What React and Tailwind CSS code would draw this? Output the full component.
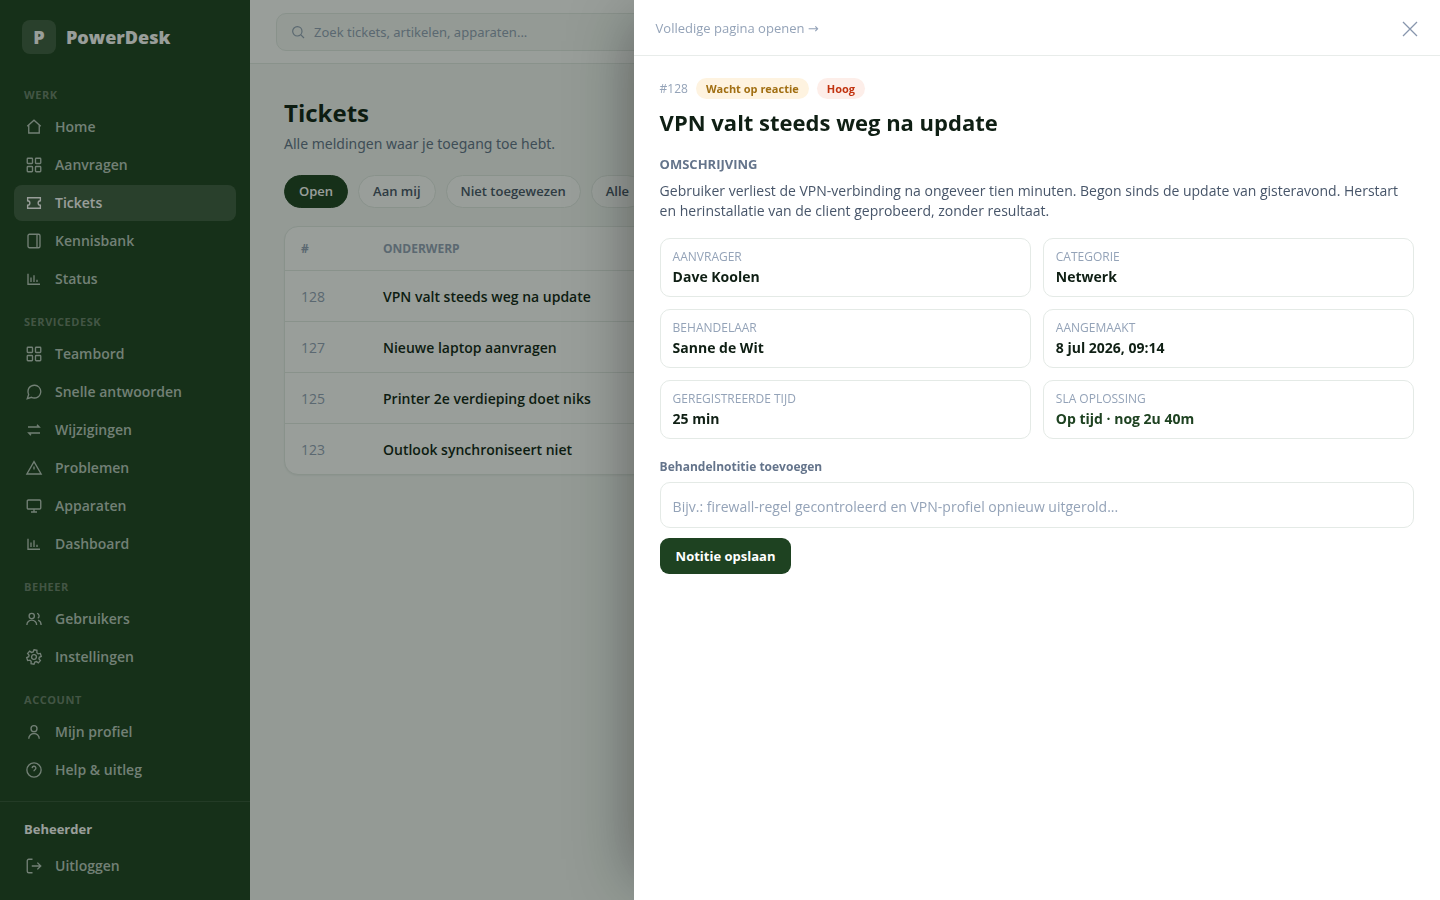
import { useState } from "react";

const icons = {
  home: <path d="M3 11l9-8 9 8M5 9.5V20h14V9.5" />,
  grid: (
    <>
      <rect x="3" y="3" width="7" height="7" rx="1" />
      <rect x="14" y="3" width="7" height="7" rx="1" />
      <rect x="3" y="14" width="7" height="7" rx="1" />
      <rect x="14" y="14" width="7" height="7" rx="1" />
    </>
  ),
  ticket: <path d="M3.5 5h17v4a3 3 0 0 0 0 6v4h-17v-4a3 3 0 0 0 0-6z" />,
  book: (
    <>
      <rect x="4" y="3" width="16" height="18" rx="2" />
      <path d="M16 3v18" />
    </>
  ),
  chart: <path d="M4 5v14h16M8 16v-6M12 16V7M16 16v-3" />,
  chat: (
    <path d="M21 11.5a8.4 8.4 0 0 1-.9 3.8 8.5 8.5 0 0 1-7.6 4.7 8.4 8.4 0 0 1-3.8-.9L3 21l1.9-5.7a8.4 8.4 0 0 1-.9-3.8 8.5 8.5 0 0 1 4.7-7.6 8.4 8.4 0 0 1 3.8-.9h.5a8.5 8.5 0 0 1 8 8z" />
  ),
  swap: <path d="M4 8h15l-3-3M20 16H5l3 3" />,
  alert: <path d="M12 3.5L21.5 20h-19zM12 10v4" />,
  monitor: (
    <>
      <rect x="3" y="4" width="18" height="12" rx="1.5" />
      <path d="M12 16v4M8 20h8" />
    </>
  ),
  users: (
    <>
      <circle cx="9" cy="8" r="3.5" />
      <path d="M2.5 20a6.5 6.5 0 0 1 13 0M16 4.5a3.5 3.5 0 0 1 1 6.5M17.5 13.5c2.4 1 4 3.3 4 6.5" />
    </>
  ),
  gear: (
    <g transform="rotate(12 12 12)">
      <circle cx="12" cy="12" r="3.2" />
      <path d="M10 2.500h4l.5 3 2 1.200 2.800-1.100 2 3.500-2.300 1.800v2.200l2.300 1.800-2 3.500-2.800-1.100-2 1.200-.5 3h-4l-.5-3-2-1.200-2.800 1.100-2-3.500L5 13.100v-2.200L2.700 9.100l2-3.500 2.800 1.100 2-1.200z" />
    </g>
  ),
  user: (
    <>
      <circle cx="12" cy="7.5" r="4" />
      <path d="M5 21a7 7 0 0 1 14 0" />
    </>
  ),
  help: (
    <>
      <circle cx="12" cy="12" r="9.5" />
      <path d="M9.5 9.5a2.5 2.5 0 1 1 3.7 2.2c-.8.5-1.2 1-1.2 1.8" />
    </>
  ),
  logout: <path d="M10 3H5a2 2 0 0 0-2 2v14a2 2 0 0 0 2 2h5M9 12h12M16.5 7.5L21 12l-4.5 4.5" />,
  search: (
    <>
      <circle cx="11" cy="11" r="7" />
      <path d="M16 16l5 5" />
    </>
  ),
};

const Icon = ({ name, className = "size-[18px]" }) => (
  <svg
    viewBox="0 0 24 24"
    className={`shrink-0 ${className}`}
    fill="none"
    stroke="currentColor"
    strokeWidth="1.8"
    aria-hidden="true"
  >
    {icons[name]}
  </svg>
);

const navGroups = [
  {
    label: "Werk",
    items: [
      { icon: "home", label: "Home" },
      { icon: "grid", label: "Aanvragen" },
      { icon: "ticket", label: "Tickets" },
      { icon: "book", label: "Kennisbank" },
      { icon: "chart", label: "Status" },
    ],
  },
  {
    label: "Servicedesk",
    items: [
      { icon: "grid", label: "Teambord" },
      { icon: "chat", label: "Snelle antwoorden" },
      { icon: "swap", label: "Wijzigingen" },
      { icon: "alert", label: "Problemen" },
      { icon: "monitor", label: "Apparaten" },
      { icon: "chart", label: "Dashboard" },
    ],
  },
  {
    label: "Beheer",
    items: [
      { icon: "users", label: "Gebruikers" },
      { icon: "gear", label: "Instellingen" },
    ],
  },
  {
    label: "Account",
    items: [
      { icon: "user", label: "Mijn profiel" },
      { icon: "help", label: "Help & uitleg" },
    ],
  },
];

const tickets = [
  { id: 128, subject: "VPN valt steeds weg na update" },
  { id: 127, subject: "Nieuwe laptop aanvragen" },
  { id: 125, subject: "Printer 2e verdieping doet niks" },
  { id: 123, subject: "Outlook synchroniseert niet" },
];

const details = [
  { label: "Aanvrager", value: "Dave Koolen" },
  { label: "Categorie", value: "Netwerk" },
  { label: "Behandelaar", value: "Sanne de Wit" },
  { label: "Aangemaakt", value: "8 jul 2026, 09:14" },
  { label: "Geregistreerde tijd", value: "25 min" },
  { label: "SLA oplossing", value: "Op tijd · nog 2u 40m", ok: true },
];

const NavItem = ({ icon, label, active }) => (
  <a
    href="#"
    className={`flex h-9 items-center gap-3 rounded-lg px-[11px] text-sm font-semibold ${
      active ? "bg-white/15 text-white" : "text-[#bccbc0]"
    }`}
  >
    <Icon name={icon} />
    {label}
  </a>
);

const Sidebar = () => (
  <aside className="flex w-[250px] shrink-0 flex-col bg-[#1e4221]">
    <div className="flex items-center gap-[10px] px-[22px] pt-5 text-white">
      <span className="flex size-[34px] items-center justify-center rounded-lg bg-white/15 text-lg font-extrabold">
        P
      </span>
      <span className="text-lg font-extrabold">PowerDesk</span>
    </div>
    <nav className="flex-1 px-[14px] pt-4">
      {navGroups.map((group) => (
        <div key={group.label}>
          <h2 className="px-[10px] pt-[17px] pb-[6px] text-[11px] leading-4 font-bold tracking-wider text-white/35 uppercase">
            {group.label}
          </h2>
          <div className="flex flex-col gap-[2px]">
            {group.items.map((item) => (
              <NavItem key={item.label} {...item} active={item.label === "Tickets"} />
            ))}
          </div>
        </div>
      ))}
    </nav>
    <div className="border-t border-white/10 px-[14px] pt-4 pb-4">
      <p className="mb-2 px-[10px] text-[13px] leading-[22px] font-bold text-white">Beheerder</p>
      <NavItem icon="logout" label="Uitloggen" />
    </div>
  </aside>
);

const TicketList = () => {
  const [filter, setFilter] = useState("Open");

  return (
    <main className="px-[34px] pt-[31px]">
      <h1 className="text-2xl leading-9 font-bold text-[#0f1f14]">Tickets</h1>
      <p className="mt-px font-['Noto_Sans',sans-serif] text-sm leading-6 text-[#64748b]">
        Alle meldingen waar je toegang toe hebt.
      </p>
      <div className="mt-[19px] flex gap-[10px]">
        {["Open", "Aan mij", "Niet toegewezen", "Alle"].map((label) => (
          <button
            key={label}
            onClick={() => setFilter(label)}
            className={`h-[33px] rounded-full border px-[14px] text-[13px] font-semibold whitespace-nowrap ${
              filter === label
                ? "border-[#1e4221] bg-[#1e4221] text-white"
                : "border-[#e4eae6] bg-white text-[#475569]"
            }`}
          >
            {label}
          </button>
        ))}
      </div>
      <div className="mt-[18px] overflow-hidden rounded-[14px] border border-[#e4eae6] bg-white shadow-xs">
        <table className="w-full text-left">
          <thead>
            <tr className="h-[43px] text-xs text-[#94a3b8] uppercase">
              <th className="w-[82px] px-4 pt-[2px] font-bold">#</th>
              <th className="px-4 pt-[2px] font-bold">Onderwerp</th>
            </tr>
          </thead>
          <tbody>
            {tickets.map((ticket) => (
              <tr key={ticket.id} className="h-[51px] border-t border-[#e4eae6] text-sm">
                <td className="px-4 pt-[2px] text-[#94a3b8]">{ticket.id}</td>
                <td className="px-4 pt-[2px] font-semibold text-[#0f1f14]">{ticket.subject}</td>
              </tr>
            ))}
          </tbody>
        </table>
      </div>
    </main>
  );
};

const TicketDrawer = ({ onClose }) => (
  <div
    role="dialog"
    aria-label="Ticket 128"
    className="fixed inset-y-0 right-0 w-[56%] bg-white shadow-[-20px_0_60px_-20px_rgba(0,0,0,0.4)]"
  >
    <div className="flex h-14 items-center justify-between border-b border-[#e8ecea] px-[22px] pt-[2px]">
      <a href="#" className="text-[13px] text-[#94a3b8]">
        Volledige pagina openen <span className="font-['DejaVu_Sans',sans-serif]">→</span>
      </a>
      <button onClick={onClose} aria-label="Sluiten" className="text-[#8796ad]">
        <svg viewBox="0 0 16 16" className="size-4" stroke="currentColor" strokeWidth="1.3" aria-hidden="true">
          <path d="M1 1l14 14M15 1L1 15" />
        </svg>
      </button>
    </div>
    <div className="px-[26px] pt-[22px]">
      <div className="flex items-center gap-2">
        <span className="text-xs text-[#94a3b8]">#128</span>
        <span className="rounded-full bg-[#fef3e0] px-[10px] text-[11px] leading-[21px] font-bold text-[#a16f12]">
          Wacht op reactie
        </span>
        <span className="rounded-full bg-[#fdeee9] px-[10px] text-[11px] leading-[21px] font-bold text-[#c2330f]">
          Hoog
        </span>
      </div>
      <h2 className="mt-[7px] text-[22px] leading-8 font-bold text-[#0f1f14]">
        VPN valt steeds weg na update
      </h2>
      <h3 className="mt-4 text-[13px] leading-5 font-bold text-[#64748b] uppercase">
        Omschrijving
      </h3>
      <p className="mt-[7px] text-sm leading-5 text-[#475569]">
        Gebruiker verliest de VPN-verbinding na ongeveer tien minuten. Begon sinds de update van
        gisteravond. Herstart en herinstallatie van de client geprobeerd, zonder resultaat.
      </p>
      <dl className="mt-[17px] grid grid-cols-2 gap-3">
        {details.map(({ label, value, ok }) => (
          <div key={label} className="rounded-[10px] border border-[#e4eae6] px-3 pt-[10px] pb-2">
            <dt className="text-xs leading-4 text-[#94a3b8] uppercase">{label}</dt>
            <dd className={`text-sm leading-[23px] font-bold ${ok ? "text-[#1e4221]" : "text-[#0f1f14]"}`}>
              {value}
            </dd>
          </div>
        ))}
      </dl>
      <form onSubmit={(e) => e.preventDefault()}>
        <label htmlFor="note" className="mt-[18px] block text-xs leading-5 font-bold text-[#64748b]">
          Behandelnotitie toevoegen
        </label>
        <input
          id="note"
          type="text"
          placeholder="Bijv.: firewall-regel gecontroleerd en VPN-profiel opnieuw uitgerold..."
          className="mt-[5px] block h-[46px] w-full rounded-[10px] border border-[#e4eae6] px-3 pt-[2px] text-sm placeholder:text-[#94a3b8]"
        />
        <button
          type="submit"
          className="mt-[10px] h-9 rounded-[9px] bg-[#1e4221] px-4 pt-[2px] text-[13px] font-bold text-white"
        >
          Notitie opslaan
        </button>
      </form>
    </div>
  </div>
);

const App = () => {
  const [open, setOpen] = useState(true);

  return (
    <div className="flex min-h-screen bg-[#f6f9f7] font-['Open_Sans','Noto_Sans',sans-serif]">
      <Sidebar />
      <div className="min-w-0 flex-1">
        <header className="flex h-16 items-center border-b border-[#e4eae6] bg-white px-[26px]">
          <label className="flex h-[38px] w-full max-w-[520px] items-center gap-2 rounded-[10px] border border-[#e4eae6] bg-[#f6f9f7] px-[13px] text-[#94a3b8]">
            <Icon name="search" className="size-4" />
            <input
              type="search"
              aria-label="Zoeken"
              placeholder="Zoek tickets, artikelen, apparaten..."
              className="w-full bg-transparent pt-[2px] font-['Noto_Sans',sans-serif] text-[13px] outline-none placeholder:text-[#94a3b8]"
            />
          </label>
        </header>
        <TicketList />
      </div>
      {open && (
        <>
          <div className="fixed inset-0 bg-[#0c180e]/42" onClick={() => setOpen(false)} />
          <TicketDrawer onClose={() => setOpen(false)} />
        </>
      )}
    </div>
  );
};

export default App;
